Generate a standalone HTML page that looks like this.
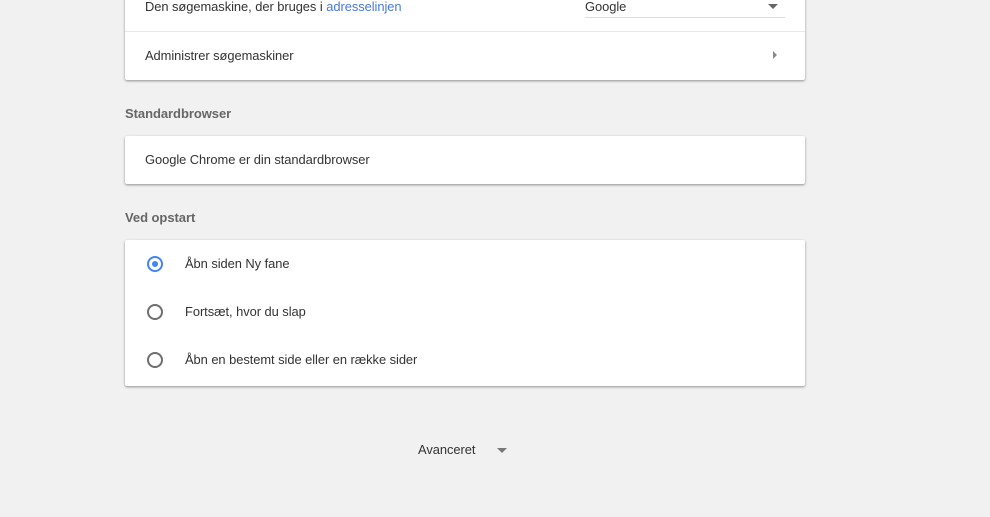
<!DOCTYPE html>
<html><head><meta charset="utf-8"><style>
body{margin:0;width:990px;height:517px;background:#f1f1f1;font-family:"Liberation Sans",sans-serif;font-size:12.9px;letter-spacing:-0.05px;color:#333;position:relative;overflow:hidden}
.card{position:absolute;left:125px;width:680px;background:#fff;box-shadow:0 1px 2px rgba(0,0,0,.3),0 1px 3px rgba(0,0,0,.12);border-radius:2px}
.row{position:absolute;left:20px}
.lbl{position:absolute;left:125px;font-weight:bold;color:#666;font-size:13px}
.radio{position:absolute;left:22px;width:12px;height:12px;border:2px solid #6e6e6e;border-radius:50%}
.radio.on{border-color:#4285f4}
.radio.on::after{content:"";position:absolute;left:3px;top:3px;width:6px;height:6px;border-radius:50%;background:#4285f4}
</style></head><body>
<div class="card" style="top:-20px;height:100px">
  <div class="row" style="top:19px">Den søgemaskine, der bruges i <span style="color:#4a78e0">adresselinjen</span></div>
  <div style="position:absolute;left:460px;top:19px">Google</div>
  <div style="position:absolute;left:460px;top:37px;width:200px;height:1px;background:#ddd"></div>
  <div style="position:absolute;left:643px;top:24px;width:0;height:0;border-left:5px solid transparent;border-right:5px solid transparent;border-top:5px solid #666"></div>
  <div style="position:absolute;left:0;top:51px;width:680px;height:1px;background:#e8e8e8"></div>
  <div class="row" style="top:68px">Administrer søgemaskiner</div>
  <div style="position:absolute;left:648px;top:71px;width:0;height:0;border-top:4px solid transparent;border-bottom:4px solid transparent;border-left:4px solid #888"></div>
</div>
<div class="lbl" style="top:106px">Standardbrowser</div>
<div class="card" style="top:136px;height:48px">
  <div class="row" style="top:16px">Google Chrome er din standardbrowser</div>
</div>
<div class="lbl" style="top:210px">Ved opstart</div>
<div class="card" style="top:240px;height:146px">
  <div class="radio on" style="top:16px"></div><div class="row" style="left:60px;top:16px">Åbn siden Ny fane</div>
  <div class="radio" style="top:64px"></div><div class="row" style="left:60px;top:64px">Fortsæt, hvor du slap</div>
  <div class="radio" style="top:112px"></div><div class="row" style="left:60px;top:112px">Åbn en bestemt side eller en række sider</div>
</div>
<div style="position:absolute;left:418px;top:442px">Avanceret</div>
<div style="position:absolute;left:497px;top:448px;width:0;height:0;border-left:5px solid transparent;border-right:5px solid transparent;border-top:5px solid #777"></div>
</body></html>
